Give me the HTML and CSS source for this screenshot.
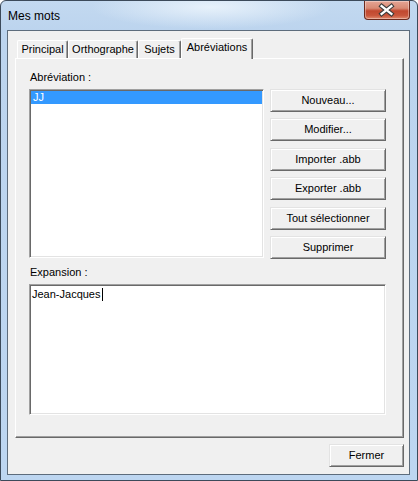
FILE: index.html
```html
<!DOCTYPE html>
<html lang="fr">
<head>
<meta charset="utf-8">
<title>Mes mots</title>
<link rel="stylesheet" href="styles.css">
</head>
<body>
<div class="window">
  <div class="titlebar">
    <span class="title">Mes mots</span>
    <div class="close">
      <svg width="46" height="19" viewBox="0 0 46 19">
        <path d="M18 5 L28 13 M28 5 L18 13" stroke="#3b3b3b" stroke-width="4.6" stroke-linecap="square" fill="none"/>
        <path d="M18 5 L28 13 M28 5 L18 13" stroke="#ffffff" stroke-width="2.4" stroke-linecap="square" fill="none"/>
      </svg>
    </div>
  </div>
  <div class="client">
    <div class="tabs">
      <div class="tab t1">Principal</div>
      <div class="tab t2">Orthographe</div>
      <div class="tab t3">Sujets</div>
      <div class="tab t4 active">Abréviations</div>
    </div>
    <div class="panel">
      <div class="label">Abréviation :</div>
      <div class="row">
        <div class="listbox">
          <div class="item selected">JJ</div>
        </div>
        <div class="buttons">
          <div class="btn">Nouveau...</div>
          <div class="btn">Modifier...</div>
          <div class="btn">Importer .abb</div>
          <div class="btn">Exporter .abb</div>
          <div class="btn">Tout sélectionner</div>
          <div class="btn">Supprimer</div>
        </div>
      </div>
      <div class="label label-exp">Expansion :</div>
      <div class="textarea">Jean-Jacques<span class="caret"></span></div>
    </div>
    <div class="footer">
      <div class="btn btn-close">Fermer</div>
    </div>
  </div>
</div>
</body>
</html>
```
FILE: styles.css
```css
html, body {
  margin: 0;
  padding: 0;
  background: #ffffff;
}

body {
  font-family: "Liberation Sans", Arial, sans-serif;
  font-size: 11px;
  color: #000;
}

.window {
  width: 418px;
  height: 481px;
  box-sizing: border-box;
  border: 1px solid #3c4a5a;
  border-radius: 6px 6px 0 0;
  padding: 0 7px 5px 6px;
  display: flex;
  flex-direction: column;
  background:
    radial-gradient(ellipse 120px 22px at 210px 6px, rgba(235,244,252,0.9), rgba(235,244,252,0) 100%),
    linear-gradient(to bottom, #c3d9f0 0px, #bcd4ee 30px, #bdd6f1 100%);
}

.titlebar {
  height: 29px;
  display: flex;
  align-items: flex-start;
  justify-content: space-between;
  flex: none;
}

.title {
  font-size: 12px;
  padding-left: 1px;
  margin-top: 8px;
  color: #000;
}

.close {
  width: 46px;
  height: 19px;
  margin-top: 0;
  box-sizing: border-box;
  border: 1px solid #6b2a1e;
  border-top: none;
  border-radius: 0 0 4px 4px;
  background: linear-gradient(to bottom, #e5a595 0%, #d88a74 40%, #c1482f 55%, #c8553b 80%, #e08a6e 100%);
  box-shadow: inset 0 0 0 1px rgba(255,255,255,0.35);
  display: flex;
}

.close svg {
  display: block;
  margin-left: -1px;
}

.client {
  flex: 1;
  border: 1px solid #5d6c7c;
  background: #f0f0f0;
  display: flex;
  flex-direction: column;
}

.tabs {
  display: flex;
  align-items: flex-end;
  height: 20px;
  margin-top: 7px;
  padding-left: 9px;
  position: relative;
  z-index: 1;
}

.tab {
  height: 18px;
  box-sizing: border-box;
  border-top: 1px solid #fff;
  border-left: 1px solid #fff;
  border-right: 1px solid #696969;
  box-shadow: inset -1px 0 #a0a0a0;
  border-radius: 2px 2px 0 0;
  background: #f0f0f0;
  padding-top: 2px;
  text-align: center;
  line-height: 13px;
}

.t1 { width: 51px; }
.t2 { width: 70px; }
.t3 { width: 43px; }
.t4 { width: 72px; }

.tab.active {
  height: 21px;
  margin-bottom: -1px;
  padding-top: 2px;
}

.panel {
  width: 389px;
  height: 380px;
  margin-left: 7px;
  box-sizing: border-box;
  border-top: 1px solid #fff;
  border-left: 1px solid #fff;
  border-right: 1px solid #696969;
  border-bottom: 1px solid #696969;
  box-shadow: inset -1px -1px #a0a0a0;
  padding: 12px 0 0 13px;
  display: flex;
  flex-direction: column;
}

.label {
  height: 13px;
  line-height: 13px;
  padding-left: 1px;
}

.row {
  display: flex;
  align-items: flex-start;
  height: 169px;
  margin-top: 5px;
}

.listbox {
  width: 235px;
  height: 169px;
  box-sizing: border-box;
  background: #fff;
  border: 1px solid;
  border-color: #a0a0a0 #fff #fff #a0a0a0;
  box-shadow: inset 1px 1px #696969, inset -1px -1px #e3e3e3;
  padding: 1px;
}

.item {
  height: 13px;
  line-height: 13px;
  padding-left: 2px;
}

.item.selected {
  background: #3399ff;
  color: #fff;
}

.buttons {
  margin-left: 6px;
  display: flex;
  flex-direction: column;
  gap: 6.4px;
}

.btn {
  width: 116px;
  height: 23px;
  box-sizing: border-box;
  border: 1px solid;
  border-color: #e3e3e3 #696969 #696969 #e3e3e3;
  box-shadow: inset 1px 1px #fff, inset -1px -1px #a0a0a0;
  background: #f0f0f0;
  display: flex;
  align-items: center;
  justify-content: center;
  line-height: 13px;
}

.label-exp {
  margin-top: 8px;
}

.textarea {
  margin-top: 5px;
  width: 357px;
  height: 131px;
  box-sizing: border-box;
  background: #fff;
  border: 1px solid;
  border-color: #a0a0a0 #fff #fff #a0a0a0;
  box-shadow: inset 1px 1px #696969, inset -1px -1px #e3e3e3;
  padding: 3px 2px;
  line-height: 13px;
}

.caret {
  display: inline-block;
  width: 1px;
  height: 13px;
  background: #000;
  vertical-align: top;
  margin-left: 1px;
}

.footer {
  display: flex;
  justify-content: flex-end;
  margin-top: 6px;
  padding-right: 5px;
}

.btn-close {
  width: 75px;
}
```
